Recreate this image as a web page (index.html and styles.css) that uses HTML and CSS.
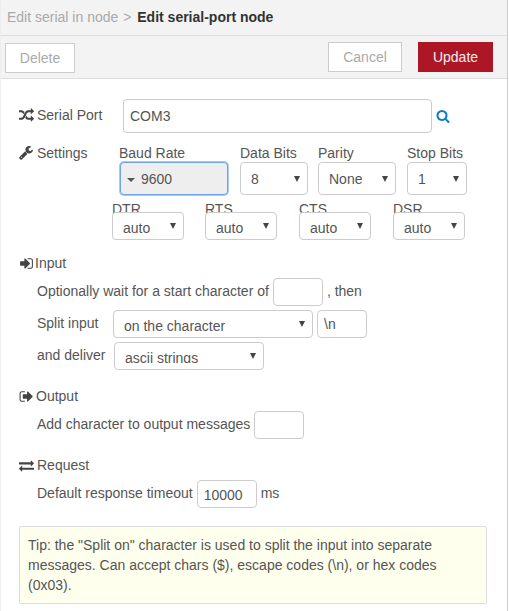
FILE: index.html
```html
<!DOCTYPE html>
<html lang="en">
<head>
  <meta charset="UTF-8" />
  <meta name="viewport" content="width=device-width, initial-scale=1.0" />
  <title>Edit serial-port node</title>
  <link rel="stylesheet" href="styles.css">
</head>
<body>
  <div class="tray">
    <div class="tray-header">
      <span class="crumb">Edit serial in node</span>
      <span class="crumb-sep">&gt;</span>
      <span class="crumb-current">Edit serial-port node</span>
    </div>

    <div class="tray-toolbar">
      <button class="btn btn-delete">Delete</button>
      <div class="toolbar-right">
        <button class="btn btn-cancel">Cancel</button>
        <button class="btn btn-update">Update</button>
      </div>
    </div>

    <form class="tray-body">
      <div class="row row-port">
        <label class="row-label">
          <svg class="icon" viewBox="0 0 1792 1792"><path d="M666 481q-60 92-137 273-22-45-37-72.5t-40.5-63.5-51-56.5-63-35-81.5-14.5h-224q-14 0-23-9t-9-23v-192q0-14 9-23t23-9h224q250 0 410 225zm1126 799q0 14-9 23l-320 320q-9 9-23 9-13 0-22.5-9.5t-9.5-22.5v-192q-32 0-85 .5t-81 1-73-1-71-5-64-10.5-63-18.5-58-28.5-59-40-55-53.5-56-69.5q59-93 136-273 22 45 37 72.5t40.5 63.5 51 56.5 63 35 81.5 14.5h256v-192q0-14 9-23t23-9q12 0 24 10l319 319q9 9 9 23zm0-896q0 14-9 23l-320 320q-9 9-23 9-13 0-22.5-9.5t-9.5-22.5v-192h-256q-48 0-87 15t-69 45-51 61.5-45 77.5q-32 62-78 171-29 66-49.5 111t-54 105-64 100-74 83-90 68.5-106.5 42-128 16.5h-224q-14 0-23-9t-9-23v-192q0-14 9-23t23-9h224q48 0 87-15t69-45 51-61.5 45-77.5q32-62 78-171 29-66 49.5-111t54-105 64-100 74-83 90-68.5 106.5-42 128-16.5h256v-192q0-14 9-23t23-9q12 0 24 10l319 319q9 9 9 23z"/></svg>
          Serial Port
        </label>
        <input class="field field-port" type="text" value="COM3">
        <svg class="icon-search" viewBox="0 0 1792 1792"><path d="M1216 832q0-185-131.5-316.5t-316.5-131.5-316.5 131.5-131.5 316.5 131.5 316.5 316.5 131.5 316.5-131.5 131.5-316.5zm512 832q0 52-38 90t-90 38q-54 0-90-38l-343-342q-179 124-399 124-143 0-273.5-55.5t-225-150-150-225-55.5-273.5 55.5-273.5 150-225 225-150 273.5-55.5 273.5 55.5 225 150 150 225 55.5 273.5q0 220-124 399l343 343q37 37 37 90z"/></svg>
      </div>

      <div class="row row-settings">
        <label class="row-label settings-label">
          <svg class="icon" viewBox="0 0 1792 1792"><path d="M384 1344q0-26-19-45t-45-19-45 19-19 45 19 45 45 19 45-19 19-45zm644-420l-682 682q-37 37-90 37-52 0-91-37l-106-108q-38-36-38-90 0-53 38-91l681-681q39 98 114.5 173.5t173.5 114.5zm634-435q0 39-23 106-47 134-164.5 217.5t-258.5 83.5q-185 0-316.5-131.5t-131.5-316.5 131.5-316.5 316.5-131.5q58 0 121.5 16.5t107.5 46.5q16 11 16 28t-16 28l-293 169v224l193 107q5-3 79-48.5t135.5-81 70.5-35.5q15 0 23.5 10t8.5 25z"/></svg>
          Settings
        </label>
        <div class="col col-baud">
          <span class="col-label">Baud Rate</span>
          <div class="combo"><span class="combo-caret"></span>9600</div>
        </div>
        <div class="col col-data">
          <span class="col-label">Data Bits</span>
          <select class="select"><option>8</option></select>
        </div>
        <div class="col col-parity">
          <span class="col-label">Parity</span>
          <select class="select"><option>None</option></select>
        </div>
        <div class="col col-stop">
          <span class="col-label">Stop Bits</span>
          <select class="select"><option>1</option></select>
        </div>
      </div>

      <div class="row row-lines">
        <div class="line-col">
          <span class="line-label">DTR</span>
          <select class="select select-short"><option>auto</option></select>
        </div>
        <div class="line-col">
          <span class="line-label">RTS</span>
          <select class="select select-short"><option>auto</option></select>
        </div>
        <div class="line-col">
          <span class="line-label">CTS</span>
          <select class="select select-short"><option>auto</option></select>
        </div>
        <div class="line-col">
          <span class="line-label">DSR</span>
          <select class="select select-short"><option>auto</option></select>
        </div>
      </div>

      <div class="heading heading-input">
        <svg class="icon" viewBox="0 0 1792 1792"><path d="M1312 896q0 26-19 45l-544 544q-19 19-45 19t-45-19-19-45v-288h-448q-26 0-45-19t-19-45v-384q0-26 19-45t45-19h448v-288q0-26 19-45t45-19 45 19l544 544q19 19 19 45zm352-352v704q0 119-84.5 203.5t-203.5 84.5h-320q-13 0-22.5-9.5t-9.5-22.5q0-4-1-20t-.5-26.5 3-23.5 10-19.5 20.5-6.5h320q66 0 113-47t47-113v-704q0-66-47-113t-113-47h-312l-11.5-1-11.5-3-8-5.5-7-9-2-13.5q0-4-1-20t-.5-26.5 3-23.5 10-19.5 20.5-6.5h320q119 0 203.5 84.5t84.5 203.5z"/></svg>
        Input
      </div>
      <div class="row row-sub row-wait">
        <span>Optionally wait for a start character of</span>
        <input class="field field-char" type="text">
        <span>, then</span>
      </div>
      <div class="row row-sub row-split">
        <span class="sub-label">Split input</span>
        <select class="select select-split"><option>on the character</option></select>
        <input class="field field-char" type="text" value="\n">
      </div>
      <div class="row row-sub row-deliver">
        <span class="sub-label">and deliver</span>
        <select class="select select-deliver"><option>ascii strings</option></select>
      </div>

      <div class="heading heading-output">
        <svg class="icon" viewBox="0 0 1792 1792"><path d="M704 1440q0 4 1 20t.5 26.5-3 23.5-10 19.5-20.5 6.5h-320q-119 0-203.5-84.5t-84.5-203.5v-704q0-119 84.5-203.5t203.5-84.5h320q13 0 22.5 9.5t9.5 22.5q0 4 1 20t.5 26.5-3 23.5-10 19.5-20.5 6.5h-320q-66 0-113 47t-47 113v704q0 66 47 113t113 47h312l11.5 1 11.5 3 8 5.5 7 9 2 13.5zm928-544q0 26-19 45l-544 544q-19 19-45 19t-45-19-19-45v-288h-448q-26 0-45-19t-19-45v-384q0-26 19-45t45-19h448v-288q0-26 19-45t45-19 45 19l544 544q19 19 19 45z"/></svg>
        Output
      </div>
      <div class="row row-sub row-output">
        <span>Add character to output messages</span>
        <input class="field field-char" type="text">
      </div>

      <div class="heading heading-request">
        <svg class="icon" viewBox="0 0 1792 1792"><path d="M1792 1184v192q0 13-9.5 22.5t-22.5 9.5h-1376v192q0 13-9.5 22.5t-22.5 9.5q-12 0-24-10l-319-320q-9-9-9-22 0-14 9-23l320-320q9-9 23-9 13 0 22.5 9.5t9.5 22.5v192h1376q13 0 22.5 9.5t9.5 22.5zm0-544q0 14-9 23l-320 320q-9 9-23 9-13 0-22.5-9.5t-9.5-22.5v-192h-1376q-13 0-22.5-9.5t-9.5-22.5v-192q0-13 9.5-22.5t22.5-9.5h1376v-192q0-14 9-23t23-9q12 0 24 10l319 319q9 9 9 23z"/></svg>
        Request
      </div>
      <div class="row row-sub row-timeout">
        <span>Default response timeout</span>
        <input class="field field-timeout" type="text" value="10000">
        <span>ms</span>
      </div>

      <div class="tip">Tip: the "Split on" character is used to split the input into separate messages. Can accept chars ($), escape codes (\n), or hex codes (0x03).</div>
    </form>
  </div>
</body>
</html>
```

FILE: styles.css
```css
html, body {
  height: 100%;
}

body {
  margin: 0;
  background-color: #fff;
  font-family: "Liberation Sans", Arial, sans-serif;
  font-size: 14px;
  color: #555;
  overflow: hidden;
}

.tray {
  width: 508px;
  height: 611px;
  box-sizing: border-box;
  border-left: 1px solid #eee;
  border-right: 1px solid #ccc;
}

.tray-header {
  height: 36px;
  box-sizing: border-box;
  padding: 9px 6px 0 6px;
  background-color: #f3f3f3;
  border-bottom: 1px solid #ddd;
  line-height: 17px;
  white-space: nowrap;
}

.crumb {
  color: #aaa;
}

.crumb-sep {
  color: #aaa;
  margin: 0 2px 0 1px;
}

.crumb-current {
  color: #333;
  font-weight: bold;
}

.tray-toolbar {
  height: 43px;
  box-sizing: border-box;
  padding: 6px 14px 0 4px;
  display: flex;
  justify-content: space-between;
  background-color: #f3f3f3;
  border-bottom: 1px solid #ddd;
}

.toolbar-right {
  display: flex;
  gap: 16px;
}

.btn {
  height: 30px;
  box-sizing: border-box;
  border: 1px solid #ccc;
  background-color: #fff;
  color: #aaa;
  font-family: inherit;
  font-size: 14px;
  padding: 0;
}

.btn-delete {
  width: 70px;
  margin-top: 1px;
}

.btn-cancel {
  width: 74px;
}

.btn-update {
  width: 75px;
  background-color: #ad1625;
  border-color: #ad1625;
  color: #eee;
}

.tray-body {
  padding: 20px 0 0 18px;
}

.row {
  display: flex;
  align-items: center;
}

.row-label {
  display: flex;
  align-items: center;
  gap: 3px;
  width: 104px;
  flex: none;
  padding-bottom: 2px;
}

.icon {
  width: 15px;
  height: 15px;
  flex: none;
  fill: #444;
}

.icon-search {
  width: 14px;
  height: 14px;
  margin-left: 4px;
  fill: #0b7fc7;
}

.field {
  height: 28px;
  box-sizing: border-box;
  border: 1px solid #ccc;
  border-radius: 4px;
  background-color: #fff;
  color: #555;
  font-family: inherit;
  font-size: 14px;
  padding: 4px 6px;
}

.field-port {
  width: 309px;
  height: 34px;
}

.field-char {
  width: 50px;
}

.field-timeout {
  width: 60px;
  padding-top: 5px;
  padding-bottom: 3px;
}

.select {
  display: block;
  height: 33px;
  box-sizing: border-box;
  border: 1px solid #ccc;
  border-radius: 4px;
  background-color: #fff;
  background-image: url("data:image/svg+xml,%3Csvg xmlns='http://www.w3.org/2000/svg' width='6' height='6'%3E%3Cpath d='M0 0h6L3 6z' fill='%23444'/%3E%3C/svg%3E");
  background-repeat: no-repeat;
  background-position: right 7px top 13px;
  appearance: none;
  color: #555;
  font-family: inherit;
  font-size: 14px;
  padding: 2px 10px;
}

.row-settings {
  align-items: flex-start;
  margin-top: 12px;
}

.settings-label {
  width: 101px;
  line-height: 17px;
}

.col-label {
  display: block;
  height: 17px;
  line-height: 17px;
}

.col-baud .col-label {
  margin-left: -1px;
}

.combo {
  width: 108px;
  height: 33px;
  box-sizing: border-box;
  display: flex;
  align-items: center;
  gap: 6px;
  padding-left: 6px;
  border: 1px solid #6ea6e5;
  border-radius: 4px;
  box-shadow: 0 0 0 1px #a9c9ef;
  background-color: #eee;
}

.combo-caret {
  width: 0;
  height: 0;
  border-left: 4px solid transparent;
  border-right: 4px solid transparent;
  border-top: 4px solid #555;
  margin-top: 2px;
}

.col-data {
  margin-left: 12px;
}

.col-data .select {
  width: 68px;
}

.col-parity {
  margin-left: 10px;
}

.col-parity .select {
  width: 78px;
}

.col-stop {
  margin-left: 11px;
}

.col-stop .select {
  width: 60px;
}

.row-lines {
  align-items: flex-start;
  gap: 22px;
  padding-left: 93px;
  margin-top: 4px;
}

.line-col:first-child {
  margin-right: -1px;
}

.line-label {
  display: block;
  height: 13px;
  line-height: 20px;
}

.select-short {
  position: relative;
  width: 72px;
  height: 28px;
  padding: 3px 10px 0;
  background-position: right 7px top 10px;
}

.heading {
  display: flex;
  align-items: center;
  line-height: 17px;
}

.heading-input {
  gap: 1px;
  margin-top: 15px;
}

.heading-output {
  gap: 2px;
  margin-top: 18px;
}

.heading-request {
  gap: 3px;
  margin-top: 18px;
}

.row-sub {
  padding-left: 18px;
  gap: 4px;
}

.row-sub > span {
  padding-bottom: 2px;
}

.row-wait {
  margin-top: 6px;
}

.row-split {
  margin-top: 4px;
}

.row-deliver {
  margin-top: 4px;
}

.row-output {
  margin-top: 6px;
}

.row-timeout {
  margin-top: 6px;
}

.sub-label {
  width: 72px;
  flex: none;
}

.select-split {
  width: 200px;
  height: 28px;
  padding: 3px 10px 0;
  background-position: right 7px top 10px;
}

.select-deliver {
  width: 150px;
  height: 28px;
  margin-left: 1px;
  padding: 7px 10px 6px;
  background-position: right 7px top 10px;
}

.tip {
  width: 468px;
  box-sizing: border-box;
  margin-top: 18px;
  padding: 8px;
  border: 1px solid #ddd;
  border-radius: 2px;
  background-color: #ffffee;
  line-height: 20px;
}
```
